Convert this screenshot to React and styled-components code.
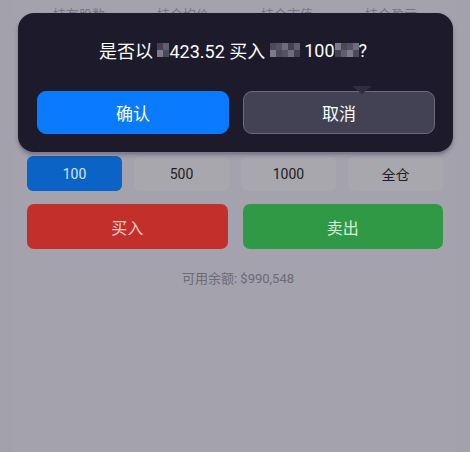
import React from "react";
import styled, { createGlobalStyle } from "styled-components";

const GlobalStyle = createGlobalStyle`
  html, body {
    margin: 0;
    padding: 0;
    background: #a3a1ab;
    font-family: Roboto, "Noto Sans CJK SC", sans-serif;
  }
  * { box-sizing: border-box; }
`;

const Page = styled.div`
  width: 470px;
  height: 452px;
  background: #a3a1ab;
  position: relative;
  overflow: hidden;
`;

const Panel = styled.div`
  margin: 0 14px;
  min-height: 452px;
  padding: 0 13px;
  background: #a4a2ac;
  display: flex;
  flex-direction: column;
`;

const HeaderRow = styled.div`
  display: grid;
  grid-template-columns: repeat(4, 1fr);
  height: 26px;
  align-items: center;
`;

const HeaderCell = styled.div`
  text-align: center;
  font-size: 13px;
  color: #77757e;
`;

const Hidden = styled.div`
  height: 130px;
`;

const QtyRow = styled.div`
  display: grid;
  grid-template-columns: repeat(4, 1fr);
  gap: 12px;
`;

const QtyButton = styled.div`
  height: 35px;
  border-radius: 6px;
  display: flex;
  align-items: center;
  justify-content: center;
  font-size: 14px;
  background: ${(p) => (p.$active ? "#0b63c6" : "#a8a7ad")};
  color: ${(p) => (p.$active ? "#d6e4f7" : "#1e1d22")};
`;

const ActionRow = styled.div`
  display: grid;
  grid-template-columns: 1fr 1fr;
  gap: 15px;
  margin-top: 13px;
`;

const ActionButton = styled.div`
  height: 45px;
  border-radius: 7px;
  display: flex;
  align-items: center;
  justify-content: center;
  font-size: 16px;
  background: ${(p) => p.$bg};
  color: ${(p) => p.$fg};
`;

const Balance = styled.div`
  margin-top: 19px;
  text-align: center;
  font-size: 13px;
  color: #6c6a73;
  padding-left: 6px;
`;

const Dialog = styled.div`
  position: absolute;
  top: 13px;
  left: 18px;
  width: 435px;
  background: #1c1a2b;
  border-radius: 16px;
  padding: 26px 18px 18px 19px;
  box-shadow: 0 2px 0 #7d7c93, 0 3px 4px rgba(40, 40, 60, 0.35);
`;

const Message = styled.div`
  display: flex;
  align-items: center;
  justify-content: center;
  height: 22px;
  font-size: 18px;
  color: #ffffff;
  white-space: pre;
  padding-right: 6px;
`;

const Mosaic = styled.span`
  display: inline-grid;
  grid-template-columns: repeat(${(p) => p.$cols}, 6px);
  grid-template-rows: repeat(2, 7px);
  margin: 0 ${(p) => p.$gap || 0}px;
  opacity: 0.85;
`;

const Cell = styled.span`
  background: ${(p) => p.$c};
`;

const ButtonRow = styled.div`
  display: grid;
  grid-template-columns: 1fr 1fr;
  gap: 14px;
  margin-top: 30px;
`;

const DialogButton = styled.div`
  height: 43px;
  border-radius: 9px;
  display: flex;
  align-items: center;
  justify-content: center;
  font-size: 17px;
  color: #ffffff;
  background: ${(p) => (p.$primary ? "#0a7bfe" : "#434154")};
  border: 1px solid ${(p) => (p.$primary ? "#0a7bfe" : "#6c6b7d")};
`;

const Arrow = styled.div`
  position: absolute;
  left: 334px;
  top: 73px;
  width: 0;
  height: 0;
  border-left: 10px solid transparent;
  border-right: 10px solid transparent;
  border-top: 8px solid #2f2d3f;
`;

const palette = ["#5e5c6e", "#7d7b8c", "#4a4859", "#6d6b7c", "#8f8d9c", "#55535f"];

function Blur({ cols, gap }) {
  const cells = [];
  for (let i = 0; i < cols * 2; i++) {
    cells.push(<Cell key={i} $c={palette[(i * 7 + cols) % palette.length]} />);
  }
  return (
    <Mosaic $cols={cols} $gap={gap}>
      {cells}
    </Mosaic>
  );
}

export default function App() {
  return (
    <Page>
      <GlobalStyle />
      <Panel>
        <HeaderRow>
          <HeaderCell>持有股数</HeaderCell>
          <HeaderCell>持仓均价</HeaderCell>
          <HeaderCell>持仓市值</HeaderCell>
          <HeaderCell>持仓盈亏</HeaderCell>
        </HeaderRow>
        <Hidden />
        <QtyRow>
          <QtyButton $active>100</QtyButton>
          <QtyButton>500</QtyButton>
          <QtyButton>1000</QtyButton>
          <QtyButton>全仓</QtyButton>
        </QtyRow>
        <ActionRow>
          <ActionButton $bg="#c3302b" $fg="#f1cbc4">买入</ActionButton>
          <ActionButton $bg="#2f9946" $fg="#d9efdb">卖出</ActionButton>
        </ActionRow>
        <Balance>可用余额: $990,548</Balance>
      </Panel>
      <Dialog>
        <Message>
          是否以 <Blur cols={2} />423.52 买入 <Blur cols={5} /> 100<Blur cols={4} />?
        </Message>
        <ButtonRow>
          <DialogButton $primary>确认</DialogButton>
          <DialogButton>取消</DialogButton>
        </ButtonRow>
        <Arrow />
      </Dialog>
    </Page>
  );
}
